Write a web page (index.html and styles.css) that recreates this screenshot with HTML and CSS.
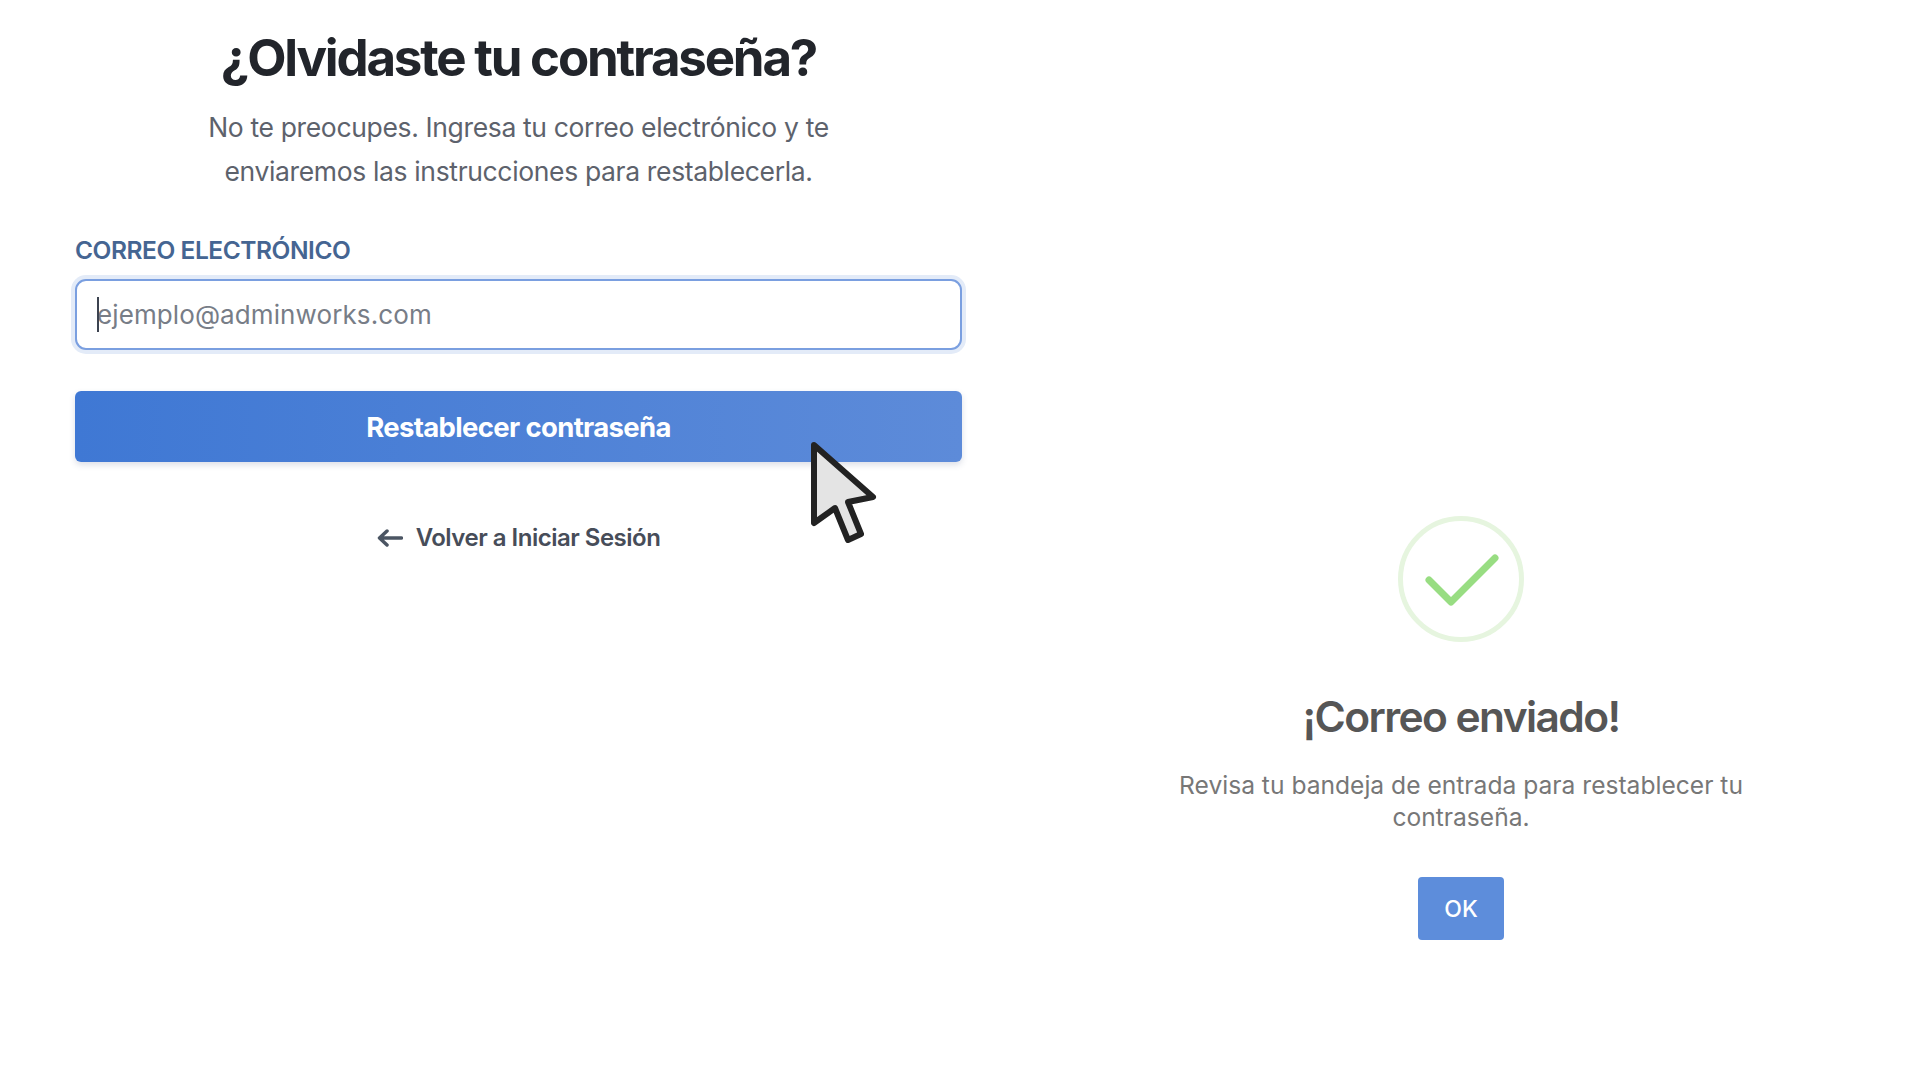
FILE: index.html
```html
<!DOCTYPE html>
<html lang="es">
<head>
<meta charset="utf-8">
<title>Restablecer contraseña</title>
<link rel="stylesheet" href="styles.css">
</head>
<body>
<main class="page">
  <section class="form-panel">
    <h1 class="form-title">¿Olvidaste tu contraseña?</h1>
    <p class="form-intro">No te preocupes. Ingresa tu correo electrónico y te<br>enviaremos las instrucciones para restablecerla.</p>
    <label class="field-label">CORREO ELECTRÓNICO</label>
    <div class="field-input"><span class="caret"></span><span class="placeholder">ejemplo@adminworks.com</span></div>
    <button class="submit" type="button">Restablecer contraseña</button>
    <a class="back-link">
      <svg class="back-arrow" width="26" height="18" viewBox="0 0 26 18" fill="none"><path d="M24.500 9H2.500M10 2 2.500 9l7.500 7" stroke="#4b5563" stroke-width="3.500" stroke-linecap="round" stroke-linejoin="round"/></svg>
      <span>Volver a Iniciar Sesión</span>
    </a>
  </section>
  <section class="success-panel">
    <svg class="success-icon" width="126" height="126" viewBox="0 0 126 126" fill="none">
      <circle cx="63" cy="63" r="60.500" stroke="#e6f5df" stroke-width="5"/>
      <path d="M31 64 53 86 97 42" stroke="#98dd82" stroke-width="7" stroke-linecap="round" stroke-linejoin="round"/>
    </svg>
    <h2 class="success-title">¡Correo enviado!</h2>
    <p class="success-text">Revisa tu bandeja de entrada para restablecer tu<br>contraseña.</p>
    <button class="ok" type="button">OK</button>
  </section>
</main>
<svg class="cursor" width="120" height="130" viewBox="0 0 120 130">
  <path d="M34 15 93 67 68 72 81 104 68 110 55 78 34 93Z" fill="#e4e4e4" stroke="#222" stroke-width="6" stroke-linejoin="round"/>
</svg>
</body>
</html>
```
FILE: styles.css
```css
* { box-sizing: border-box; }
html, body { margin: 0; height: 100%; background: #fff; }
body { font-family: Inter, "Liberation Sans", sans-serif; overflow: hidden; }
.page { display: flex; height: 1080px; overflow: hidden; }

.form-panel { flex: 0 0 1000px; padding: 25px 38px 0 75px; display: flex; flex-direction: column; }
.form-title { margin: 0; font-size: 51px; line-height: 66px; font-weight: 700; letter-spacing: -2.200px; color: #22252b; text-align: center; white-space: nowrap; }
.form-intro { margin: 14px 0 0; font-size: 26.500px; line-height: 44px; letter-spacing: -0.350px; color: #5d626c; text-align: center; }
.field-label { margin-top: 40px; font-size: 24.500px; line-height: 34px; font-weight: 600; letter-spacing: -0.450px; color: #456592; }
.field-input { position: relative; margin-top: 12px; height: 71px; border: 2px solid #7a9fe0; border-radius: 11px; box-shadow: 0 0 0 4px #e3ebf8; display: flex; align-items: center; padding-left: 20px; background: #fff; }
.caret { position: absolute; left: 20px; top: 16px; width: 2px; height: 35px; background: #3c4350; }
.placeholder { font-size: 26px; letter-spacing: 0.100px; color: #777d87; }
.submit { margin-top: 41px; height: 71px; border: 0; border-radius: 6px; background: linear-gradient(90deg, #3f78d4, #5d8bd9); color: #fff; font: 700 27.500px Inter, "Liberation Sans", sans-serif; letter-spacing: -0.650px; box-shadow: 0 3px 6px rgba(60, 80, 120, .18); }
.back-link { margin-top: 59px; align-self: center; display: flex; align-items: center; gap: 13px; font-size: 24px; line-height: 34px; font-weight: 600; letter-spacing: -0.500px; color: #474d59; }

.success-panel { flex: 0 0 922px; padding-top: 516px; display: flex; flex-direction: column; align-items: center; }
.success-title { margin: 45px 0 0; font-size: 42.500px; line-height: 60px; font-weight: 600; letter-spacing: -1.600px; color: #565656; }
.success-text { margin: 22px 0 0; font-size: 24.600px; line-height: 32px; color: #777; text-align: center; }
.ok { margin-top: 44px; width: 86px; height: 63px; border: 0; border-radius: 4px; background: #5d8ddb; color: #fff; font: 500 23px Inter, "Liberation Sans", sans-serif; }

.cursor { position: absolute; left: 780px; top: 430px; }
```
